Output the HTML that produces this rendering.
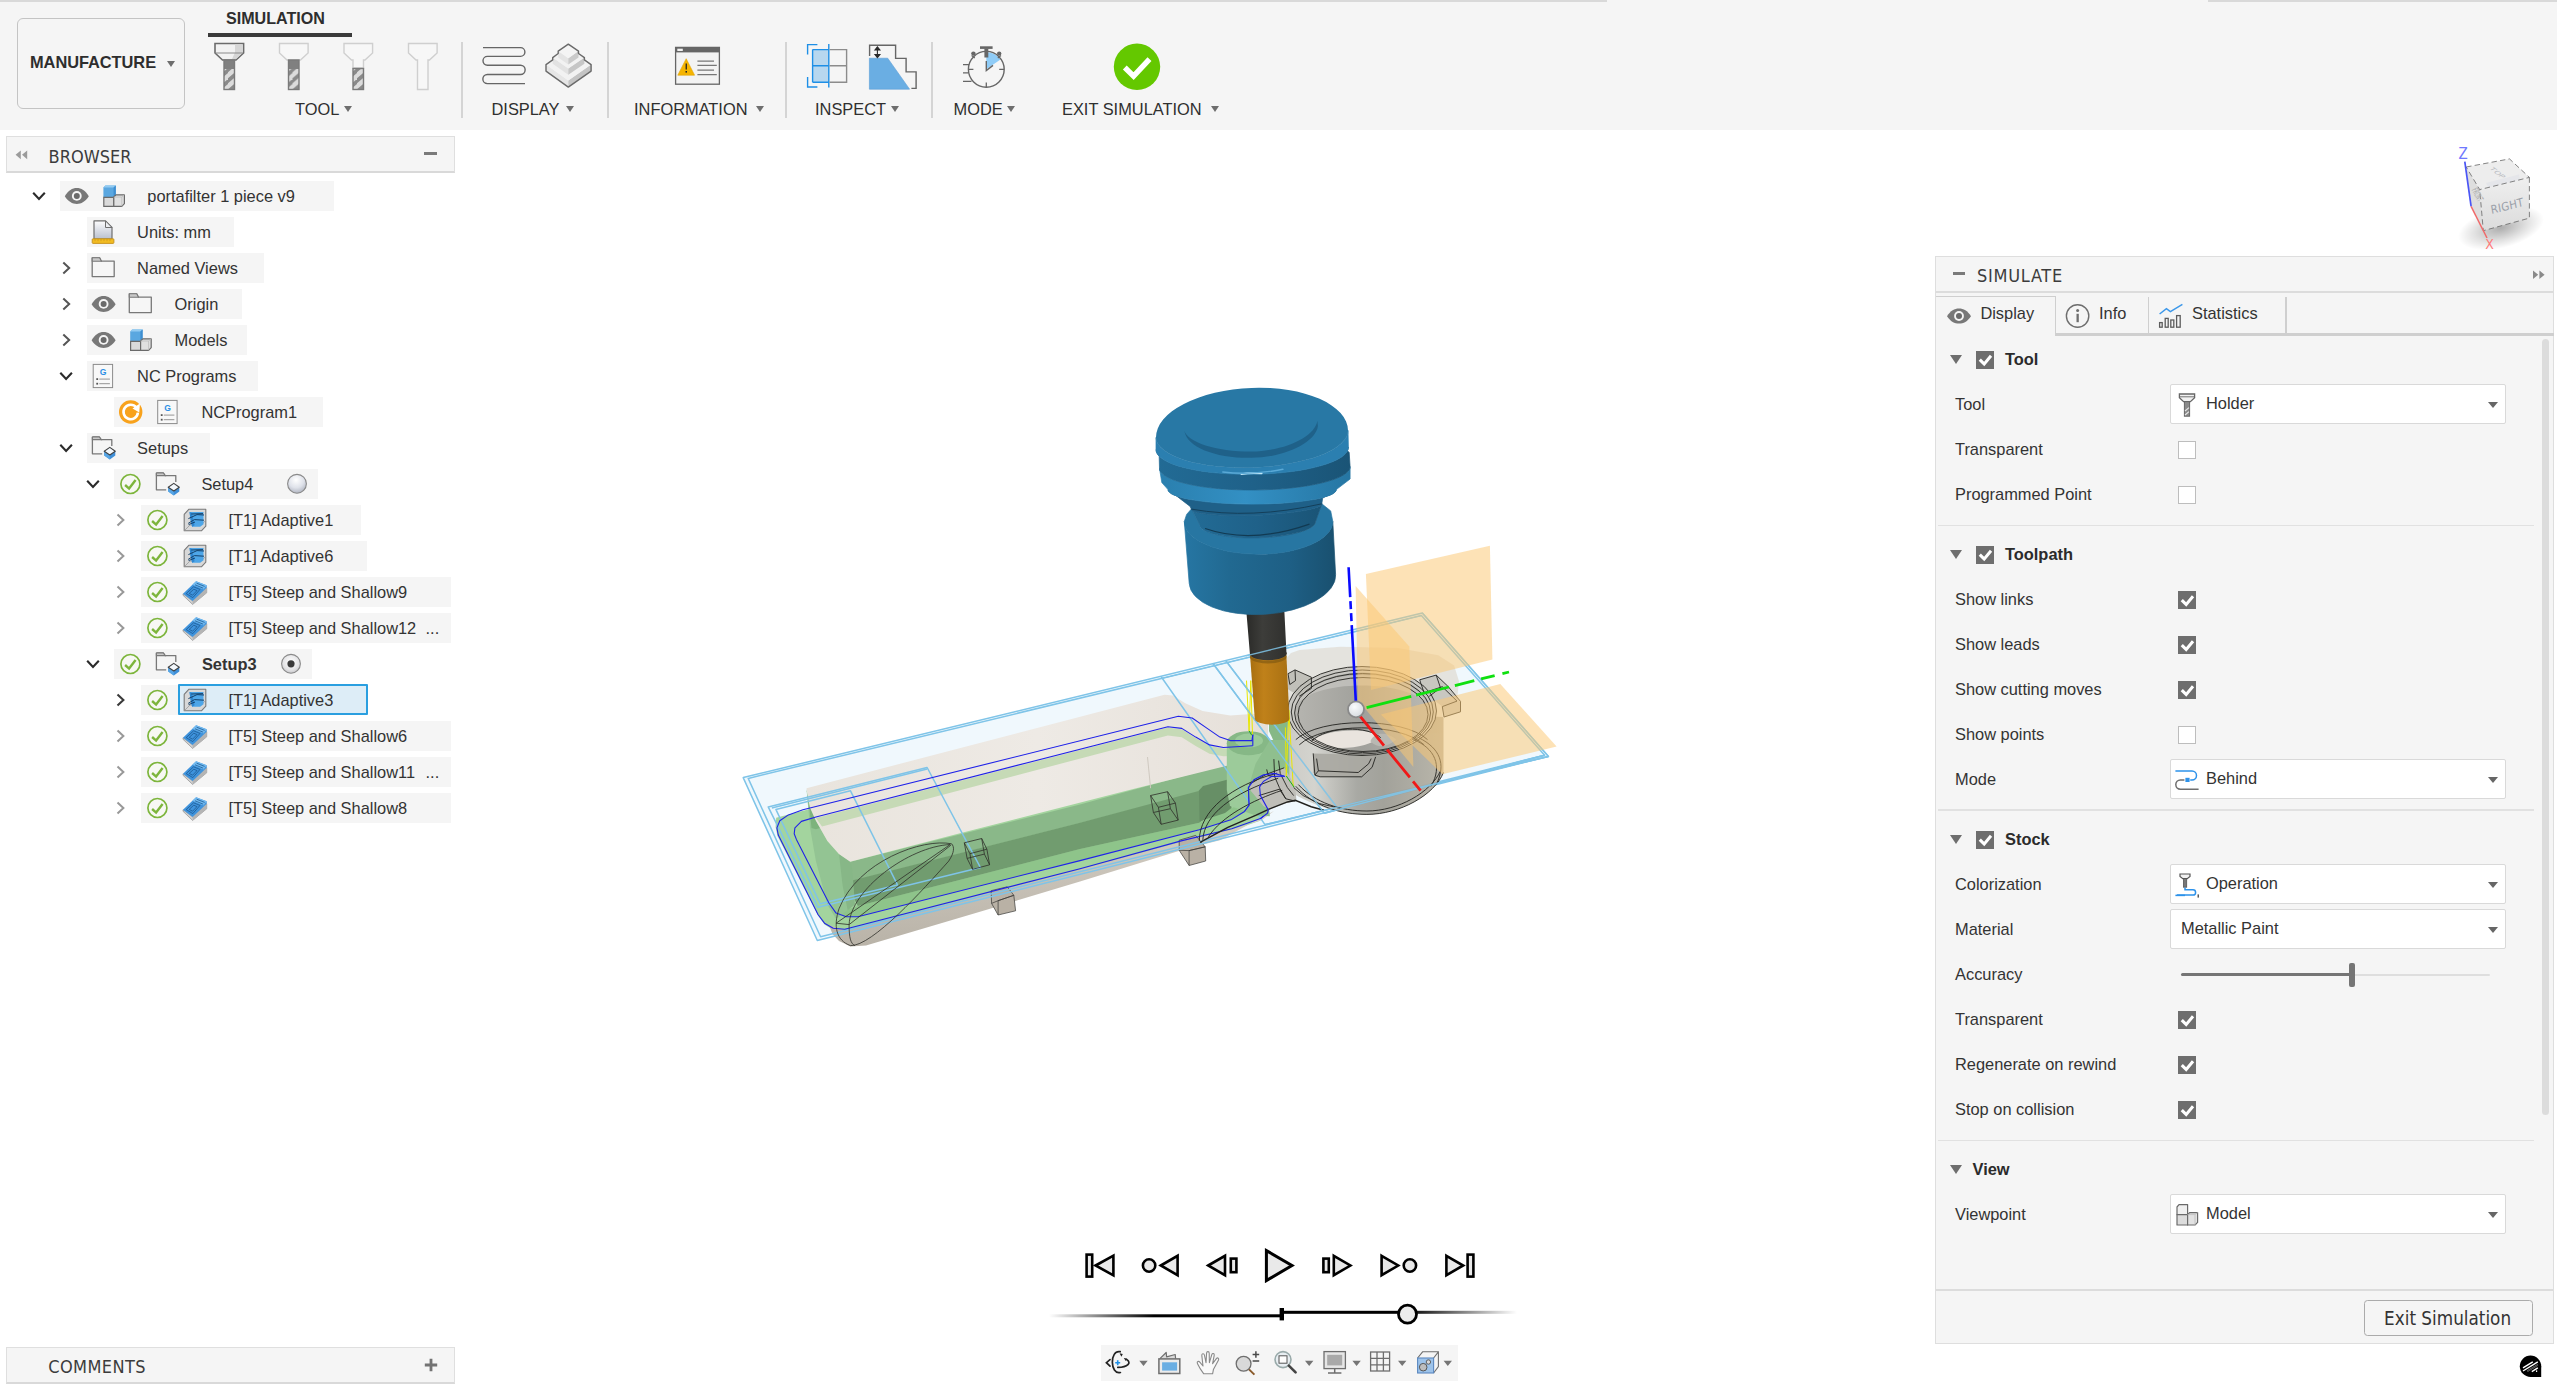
<!DOCTYPE html>
<html lang="en"><head><meta charset="utf-8"><title>Fusion 360 - Simulate</title>
<style>
*{box-sizing:border-box;margin:0;padding:0}
html,body{width:2557px;height:1385px;overflow:hidden;background:#fff}
body{position:relative;font-family:"Liberation Sans",Arial,sans-serif;font-size:16.4px;color:#333;-webkit-font-smoothing:antialiased}
.abs{position:absolute}
.t{position:absolute;white-space:nowrap;line-height:20px;height:20px}
.cond{font-family:"DejaVu Sans Condensed","DejaVu Sans","Liberation Sans",sans-serif;font-size:18px;color:#3c3c3c}
#toolbar{position:absolute;left:0;top:0;width:2557px;height:130px;background:#f5f5f5}
.sep{position:absolute;top:42px;width:2px;height:76px;background:#d4d4d4}
.tlabel{position:absolute;top:98px;height:22px;line-height:22px;white-space:nowrap;color:#2f2f2f}
.arr{position:absolute;width:0;height:0;border-left:4.5px solid transparent;border-right:4.5px solid transparent;border-top:6px solid #6e6e6e}
.rowbg{position:absolute;height:30px;background:#f5f5f5}
.rt{position:absolute;height:30px;line-height:30px;white-space:nowrap;color:#333}
svg{position:absolute;overflow:visible}
.plabel{position:absolute;left:1955px;height:20px;line-height:20px;white-space:nowrap;color:#333}
.dd{position:absolute;left:2170px;width:336px;height:40px;background:#fff;border:1px solid #d9d9d9;border-radius:2px}
.dd span{position:absolute;left:35px;top:0;height:38px;line-height:38px;white-space:nowrap}
.dd i{position:absolute;right:7px;top:17px;width:0;height:0;border-left:5px solid transparent;border-right:5px solid transparent;border-top:6px solid #666}
.cb{position:absolute;left:2178px;width:18px;height:18px;background:#fff;border:1px solid #bdbdbd}
.cbc{position:absolute;width:18px;height:18px;background:#6e6e6e}
.cbc:after{content:"";position:absolute;left:0;top:0;width:18px;height:18px;background:#fff;clip-path:polygon(15% 57%,27% 45%,45% 63%,77% 24%,90% 35%,46% 88%)}
.tri{position:absolute;width:0;height:0;border-left:6.5px solid transparent;border-right:6.5px solid transparent;border-top:9px solid #6e6e6e}
.hline{position:absolute;left:1938px;width:596px;height:1.5px;background:#e1e1e1}
.sect{position:absolute;height:20px;line-height:20px;font-weight:bold;color:#2b2b2b;white-space:nowrap}
</style></head><body>
<div id="toolbar">
<div class="abs" style="left:0;top:0;width:1607px;height:2px;background:#d9d9d9"></div>
<div class="abs" style="left:2208px;top:0;width:349px;height:2px;background:#d9d9d9"></div>
<div class="abs" style="left:17px;top:18px;width:168px;height:91px;border:1px solid #c4c4c4;border-radius:6px"></div>
<div class="t" style="left:30px;top:52px;font-weight:bold;font-size:16.4px;color:#2e2e2e;letter-spacing:-0.05px">MANUFACTURE</div>
<div class="arr" style="left:167px;top:61px"></div>
<div class="t" style="left:226px;top:8px;font-weight:bold;font-size:16.1px;color:#2e2e2e">SIMULATION</div>
<div class="abs" style="left:208px;top:33px;width:144px;height:4px;background:#3a3a3a"></div>
<!-- tool icons -->
<svg style="left:210px;top:40px" width="240" height="54" viewBox="210 40 240 54">
 <defs>
  <pattern id="fl" width="12" height="11" patternUnits="userSpaceOnUse" patternTransform="translate(0,69)"><rect width="12" height="11" fill="#dcdcdc"/><path d="M-2 11 L12 -1 L12 4 L-2 16Z M-2 0 L12 -12 L12 -7 L-2 5Z" fill="#8a8a8a"/></pattern>
 </defs>
 <g>
  <path d="M215 43.5 H243.6 V53 L236 60 H222.5 L215 53Z" fill="#f2f2f2" stroke="#6b6b6b" stroke-width="1.6"/>
  <path d="M235 44.5 H242.8 V52.6 L236 59 H232 L235 52.6Z" fill="#d6d6d6"/>
  <path d="M215.6 53 H243" stroke="#8a8a8a" stroke-width="1" fill="none"/>
  <rect x="224" y="60" width="10.5" height="9.5" fill="#808080"/>
  <rect x="224" y="69" width="10.5" height="20.5" fill="url(#fl)"/>
  <rect x="224" y="60" width="10.5" height="29.5" fill="none" stroke="#7a7a7a" stroke-width="1.4"/>
 </g>
 <g transform="translate(64.5,0)">
  <path d="M215 43.5 H243.6 V53 L236 60 H222.5 L215 53Z" fill="#f7f7f7" stroke="#cfcfcf" stroke-width="1.4"/>
  <rect x="224" y="60" width="10.5" height="9.5" fill="#808080"/>
  <rect x="224" y="69" width="10.5" height="20.5" fill="url(#fl)"/>
  <rect x="224" y="60" width="10.5" height="29.5" fill="none" stroke="#7a7a7a" stroke-width="1.4"/>
 </g>
 <g transform="translate(129,0)">
  <path d="M215 43.5 H243.6 V53 L236 60 H234.5 V68 H224 V60 H222.5 L215 53Z" fill="#f7f7f7" stroke="#cfcfcf" stroke-width="1.4"/>
  <rect x="224" y="68.5" width="10.5" height="21" fill="url(#fl)"/>
  <rect x="224" y="68.5" width="10.5" height="21" fill="none" stroke="#7a7a7a" stroke-width="1.4"/>
 </g>
 <g transform="translate(193.5,0)">
  <path d="M215 43.5 H243.6 V53 L236 60 H234.5 V89.5 H224 V60 H222.5 L215 53Z" fill="#f7f7f7" stroke="#cfcfcf" stroke-width="1.4"/>
 </g>
</svg>
<div class="tlabel" style="left:295px">TOOL</div><div class="arr" style="left:344px;top:106px"></div>
<div class="sep" style="left:461px"></div>
<!-- display icons -->
<svg style="left:480px;top:40px" width="120" height="54" viewBox="480 40 120 54">
 <path d="M483 47.6 H520.5 a4.4 4.4 0 0 1 0 8.8 H487.4 a4.4 4.4 0 0 0 0 8.8 H520.5 a4.6 4.6 0 0 1 0 9.3 H487.4 a4.5 4.5 0 0 0 0 9.1 H525" fill="none" stroke="#666" stroke-width="1.4"/>
 <path d="M546 64.6 L568.3 80.4 V87.1 L546 71.1Z" fill="#e6e6e6"/>
 <path d="M591.1 64.6 L568.3 80.4 V87.1 L591.1 71.1Z" fill="#c4c4c4"/>
 <path d="M546 64.6 L568.3 48.8 L591.1 64.6 L568.3 80.4Z" fill="#f2f2f2"/>
 <path d="M552.7 57.6 L568.3 68.6 V74.8 L552.7 63.8Z" fill="#e2e2e2"/>
 <path d="M584.4 57.6 L568.3 68.6 V74.8 L584.4 63.8Z" fill="#c6c6c6"/>
 <path d="M552.7 57.6 L568.3 46.6 L584.4 57.6 L568.3 68.6Z" fill="#f2f2f2"/>
 <path d="M558.2 51.1 L568.3 58.2 V64.6 L558.2 57.5Z" fill="#e4e4e4"/>
 <path d="M578.5 51.1 L568.3 58.2 V64.6 L578.5 57.5Z" fill="#cacaca"/>
 <path d="M558.2 51.1 L568.3 44.1 L578.5 51.1 L568.3 58.2Z" fill="#f4f4f4"/>
 <path d="M568.3 44.1 L578.5 51.1 V53.5 L584.4 57.6 V59.9 L591.1 64.6 V71.1 L568.3 87.1 L546 71.1 V64.6 L552.7 59.9 V57.6 L558.2 53.5 V51.1Z" fill="none" stroke="#6a6a6a" stroke-width="1.4" stroke-linejoin="round"/>
</svg>
<div class="tlabel" style="left:491.5px">DISPLAY</div><div class="arr" style="left:566px;top:106px"></div>
<div class="sep" style="left:606.5px"></div>
<!-- information icon -->
<svg style="left:670px;top:40px" width="60" height="54" viewBox="670 40 60 54">
 <rect x="675.6" y="47.4" width="43.8" height="36.8" fill="#f3f3f3" stroke="#666" stroke-width="1.3"/>
 <rect x="675.6" y="47.4" width="43.8" height="5" fill="#666"/>
 <rect x="677.3" y="48.7" width="5.5" height="2.3" fill="#f3f3f3"/>
 <path d="M686.2 58.7 L694.6 75.2 H677.8Z" fill="#f5b400" stroke="#e0a200" stroke-width="0.6" stroke-linejoin="round"/>
 <rect x="685.6" y="63.5" width="1.3" height="6" fill="#222"/><rect x="685.5" y="71" width="1.5" height="1.6" fill="#222"/>
 <path d="M697.4 61.2 H714 M697.4 65.3 H716.8 M697.4 70.1 H714 M697.4 74.6 H716.8" stroke="#777" stroke-width="1.2"/>
</svg>
<div class="tlabel" style="left:634px">INFORMATION</div><div class="arr" style="left:756px;top:106px"></div>
<div class="sep" style="left:785px"></div>
<!-- inspect icons -->
<svg style="left:800px;top:40px" width="125" height="54" viewBox="800 40 125 54">
 <rect x="812.6" y="49.6" width="16" height="32.6" fill="#b7d7ef"/>
 <path d="M812.6 49.6 H828.7 M812.6 65.8 H828.7 M812.6 82.2 H828.7 M812.6 49.6 V82.2" stroke="#1e8fe6" stroke-width="1.4" fill="none"/>
 <path d="M817.4 44.6 H807.6 V54.6 M817.4 87 H807.6 V77 M828.8 44 V87.6" stroke="#1e8fe6" stroke-width="1.4" fill="none"/>
 <path d="M829.5 49.6 H846.6 V82.2 H829.5 M829.5 65.8 H846.6" stroke="#8c8c8c" stroke-width="1.4" fill="none"/>
 <path d="M869.4 58.2 H887.7 L909.6 89.2 H869.4Z" fill="#6aaee3" stroke="#5a9ed6" stroke-width="0.6"/>
 <path d="M869.6 56 V45.2 H895.6 V58.4 H906.1 V71.9 H916.1 V88.4 H911.4" fill="none" stroke="#666" stroke-width="1.4"/>
 <path d="M877.4 48 V56.5 M874.9 50 L877.4 46.8 L879.9 50Z M874.9 54.5 L877.4 57.7 L879.9 54.5Z" stroke="#2a2a2a" stroke-width="1.1" fill="#2a2a2a"/>
</svg>
<div class="tlabel" style="left:815px">INSPECT</div><div class="arr" style="left:891px;top:106px"></div>
<div class="sep" style="left:930.5px"></div>
<!-- mode icon -->
<svg style="left:955px;top:40px" width="60" height="54" viewBox="955 40 60 54">
 <path d="M986.3 69.3 V52.2 A17.2 17.2 0 0 1 1000.5 59.6Z" fill="#8fccf7"/>
 <circle cx="986.3" cy="69.3" r="17.9" fill="none" stroke="#666" stroke-width="1.4"/>
 <rect x="980" y="46.3" width="12.6" height="2.6" fill="#666"/><rect x="984.4" y="48.5" width="3.9" height="9" fill="#666"/>
 <circle cx="973.4" cy="53.6" r="2.2" fill="#666"/><circle cx="999.2" cy="53.6" r="2.2" fill="#666"/>
 <path d="M971.6 55.5 L974.8 58 M1001 55.5 L997.8 58" stroke="#666" stroke-width="1.2"/>
 <path d="M986.3 61 V70.5 L993 65.4" fill="none" stroke="#666" stroke-width="1.4"/>
 <path d="M968.6 69.3 H973.4 M999.2 69.3 H1004 M986.3 82.4 V87" stroke="#666" stroke-width="1.3"/>
 <path d="M963 64.6 H969 M963 72.8 H968 M963 81.3 H971.5" stroke="#666" stroke-width="1.3"/>
</svg>
<div class="tlabel" style="left:953.5px">MODE</div><div class="arr" style="left:1007px;top:106px"></div>
<!-- exit -->
<svg style="left:1110px;top:40px" width="54" height="54" viewBox="1110 40 54 54">
 <circle cx="1137" cy="66.8" r="23.2" fill="#64c800"/>
 <path d="M1124.8 67.5 L1133.6 76.2 L1149.5 59.2" fill="none" stroke="#fff" stroke-width="5.4" stroke-linejoin="miter"/>
</svg>
<div class="tlabel" style="left:1062px">EXIT SIMULATION</div><div class="arr" style="left:1211px;top:106px"></div>
</div>
<!-- BROWSER -->
<svg width="0" height="0" style="left:0;top:0"><defs>
<linearGradient id="gdoc" x1="0" y1="0" x2="0" y2="1"><stop offset="0" stop-color="#fdfdfe"/><stop offset="1" stop-color="#b9c0cf"/></linearGradient>
<radialGradient id="grad0" cx="0.45" cy="0.3" r="0.75"><stop offset="0" stop-color="#ffffff"/><stop offset="0.55" stop-color="#dfe2ea"/><stop offset="1" stop-color="#a9aebb"/></radialGradient>
<radialGradient id="grad1" cx="0.5" cy="0.4" r="0.7"><stop offset="0" stop-color="#ffffff"/><stop offset="0.6" stop-color="#e4e4e6"/><stop offset="1" stop-color="#b9b9bd"/></radialGradient>
<g id="i-eye"><path d="M-12 0.2 C-8.5 -5.4 -4.5 -7.9 0 -7.9 C4.5 -7.9 8.5 -5.4 12 0.2 C8.5 5.6 4.5 7.9 0 7.9 C-4.5 7.9 -8.5 5.6 -12 0.2Z" fill="#787878"/><circle cx="0" cy="-0.1" r="4.9" fill="#f5f5f5"/><circle cx="0" cy="-0.1" r="3" fill="#6a6a6a"/></g>
<g id="i-cd"><path d="M-5.8 -3.3 L0 2.9 L5.8 -3.3" fill="none" stroke="#2b2b2b" stroke-width="2.1"/></g>
<g id="i-cr"><path d="M-3 -5.6 L2.9 0 L-3 5.6" fill="none" stroke="#555" stroke-width="2"/></g>
<g id="i-crg"><path d="M-3 -5.6 L2.9 0 L-3 5.6" fill="none" stroke="#999" stroke-width="2"/></g>
<g id="i-crd"><path d="M-3 -5.6 L2.9 0 L-3 5.6" fill="none" stroke="#3a3a3a" stroke-width="2.1"/></g>
<g id="i-comp"><path d="M-10.6 -8.4 L-8.6 -10.5 H1.8 V-0.6 L-0.4 1.4 H-10.6Z" fill="#5aa7e0"/><path d="M-10.6 -8.4 L-8.6 -10.5 H1.8 L-0.4 -8.4Z" fill="#93cbf2"/><path d="M-0.4 -8.4 L1.8 -10.5 V-0.6 L-0.4 1.4Z" fill="#3e8ed0"/><path d="M-10.2 1.4 H-0.2 V10.3 H-10.2Z" fill="#dadada" stroke="#6a6a6a" stroke-width="1.2"/><path d="M-0.2 1 L2 -1.2 H10.4 V7.6 L7.8 10.3 H-0.2Z" fill="#e0e0e0" stroke="#6a6a6a" stroke-width="1.2" stroke-linejoin="round"/><path d="M-0.2 1 H7.8 V10.3 M7.8 1 L10.4 -1.2" fill="none" stroke="#bdbdbd" stroke-width="0.8"/></g>
<g id="i-units"><path d="M-9 -9.6 H2.5 L9 -3 V8.5 H-9Z" fill="url(#gdoc)" stroke="#6e6e6e" stroke-width="1.2" stroke-linejoin="round"/><path d="M2.5 -9.6 V-3 H9Z" fill="#eceef2" stroke="#6e6e6e" stroke-width="1" stroke-linejoin="round"/><rect x="-10.8" y="8.3" width="21.7" height="4.6" rx="0.8" fill="#f2bc22" stroke="#c48f1a" stroke-width="0.9"/><path d="M-8 8.6 v2 M-5 8.6 v2 M-2 8.6 v2 M1 8.6 v2 M4 8.6 v2 M7 8.6 v2" stroke="#c48f1a" stroke-width="0.6"/></g>
<g id="i-fold"><path d="M-11 -9.4 H-3.6 L-1.8 -6 H11 V9.4 H-11Z" fill="#f6f6f6" stroke="#787878" stroke-width="1.3" stroke-linejoin="round"/><path d="M-11 -9.4 H-3.6 L-1.8 -6 H-11Z" fill="#c9c9c9" stroke="#787878" stroke-width="1.1" stroke-linejoin="round"/></g>
<g id="i-nc"><rect x="-9.7" y="-11.6" width="19.4" height="23.2" fill="#f8f8f8" stroke="#8a8a8a" stroke-width="1"/><rect x="-6.6" y="2.2" width="1.8" height="1.8" fill="#555"/><rect x="-6.6" y="6.8" width="1.8" height="1.8" fill="#555"/><path d="M-3.6 3.1 H7 M-3.6 7.7 H7" stroke="#8a8a8a" stroke-width="0.9"/></g>
<g id="i-ref"><circle r="11.7" fill="#f8a21c"/><path d="M5.6 -4.6 A7.2 7.2 0 1 0 7.2 0.6" fill="none" stroke="#fff" stroke-width="2.6"/><path d="M1.8 -3.4 L9.2 -8.4 L8.6 0.6Z" fill="#fff"/></g>
<g id="i-setup"><path d="M-10.8 -11 H-3.8 L-2 -8.4 H8.6 V-2 M-1 5.8 H-10.8 V-11" fill="none" stroke="#787878" stroke-width="1.3" stroke-linejoin="round"/><path d="M-10.8 -11 H-3.8 L-2 -8.4 H-10.8Z" fill="#c9c9c9" stroke="#787878" stroke-width="1.1"/><path d="M6.6 -0.6 L12.1 3.2 V7.6 L6.6 11.6 L1 7.6 V3.2Z" fill="#3f8fd8"/><path d="M1 3.2 L6.6 7 V11.6 L1 7.6Z" fill="#57a6e6"/><path d="M6.6 -0.6 L12.1 3.2 L6.6 7 L1 3.2Z" fill="#f4f8fc" stroke="#444" stroke-width="1.1" stroke-linejoin="round"/></g>
<g id="i-ok"><circle r="9.5" fill="#f7f8f3" stroke="#7db53c" stroke-width="1.7"/><path d="M-5.3 1 L-1.3 4.6 L5.2 -3.9" fill="none" stroke="#7db53c" stroke-width="2.4"/></g>
<g id="i-r0"><circle r="9.4" fill="url(#grad0)" stroke="#8a8a8a" stroke-width="1.1"/></g>
<g id="i-r1"><circle r="9.4" fill="url(#grad1)" stroke="#8a8a8a" stroke-width="1.1"/><circle r="3.6" fill="#3a3a3a"/></g>
<g id="i-adp"><path d="M-6 -10.8 H10.8 V6.2 L6.4 10.8 H-10.8 V-5.6Z" fill="#d8d8d8" stroke="#7a7a7a" stroke-width="1.1" stroke-linejoin="round"/><path d="M-10.8 10.8 L-5 5 H6 L10.8 0.4" fill="none" stroke="#9a9a9a" stroke-width="0.8"/><path d="M-5.5 -8.1 H8.5 V4.2 L5.2 6.8 H-2.9 L-4.4 0.2Z" fill="#4ea6e8"/><path d="M-2.9 6.8 L-4.4 0.2 L-5.5 -8.1 L-3 -7 L-1.4 1 L-0.4 5.2Z" fill="#2f86d0"/><path d="M-6.6 -1.4 L2 -5.4 L9 -5 M-6.8 3.4 L-0.6 -0.4 L9 0.2 M-3.6 -6 L8 -6.4 M-6.4 4.6 L0 2" stroke="#14416a" stroke-width="1" fill="none"/></g>
<g id="i-sns"><path d="M-12 1.8 L-2.4 8.9 L11.7 -4.2 V0.8 L-2.4 12.4 L-12 3.3Z" fill="#d2d2d2" stroke="#8e8e8e" stroke-width="0.7" stroke-linejoin="round"/><path d="M-2.4 8.9 L11.7 -4.2 V0.8 L-2.4 12.4Z" fill="#b4b4b4"/><path d="M-12 1.8 L1.1 -10.8 L11.7 -6.8 V-4.2 L-2.4 8.9Z" fill="#3f93dc"/><path d="M1.1 -10.8 L11.7 -6.8 L8.6 -2.6 L-2.6 -7.2Z" fill="#72baf0"/><path d="M-8.8 1.6 L-1.4 -5.2 L5 -2.6 L-2.2 5.6Z M-5.8 1.4 L-1.2 -2.8 L2 -1.4 L-2.4 3.2Z" fill="none" stroke="#1c5a94" stroke-width="0.8" stroke-linejoin="round"/><path d="M1.6 -8.8 L9.6 -5.6 M0 -7.2 L8.2 -3.8" stroke="#1c5a94" stroke-width="0.8"/></g>
</defs></svg>
<div class="abs" style="left:6px;top:136px;width:449px;height:37px;background:#f5f5f5;border:1px solid #dfdfdf;border-bottom:2px solid #d9d9d9"></div>
<svg style="left:14px;top:148px" width="16" height="14" viewBox="14 148 16 14"><path d="M20.8 150.4 V159.2 L15.6 154.8Z M27.2 150.4 V159.2 L22 154.8Z" fill="#9b9b9b"/></svg>
<div class="t cond" style="left:48.6px;top:146.6px;letter-spacing:0.02px">BROWSER</div>
<div class="abs" style="left:424px;top:152.4px;width:12.6px;height:3px;background:#7a7a7a"></div>
<div class="abs" style="left:6px;top:1347px;width:449px;height:37px;background:#f5f5f5;border:1px solid #dfdfdf;border-bottom:2px solid #d9d9d9"></div>
<div class="t cond" style="left:48.2px;top:1357.2px;letter-spacing:0.42px">COMMENTS</div>
<svg style="left:423.5px;top:1358.2px" width="14" height="14" viewBox="0 0 14 14"><path d="M7 0.8 V13.2 M0.8 7 H13.2" stroke="#737373" stroke-width="2.8"/></svg>
<div class="rowbg" style="left:60px;top:181px;width:274px"></div>
<div class="rt" style="left:147.3px;top:181px;">portafilter 1 piece v9</div>
<div class="rowbg" style="left:87px;top:217px;width:147px"></div>
<div class="rt" style="left:137.1px;top:217px;">Units: mm</div>
<div class="rowbg" style="left:87px;top:253px;width:177px"></div>
<div class="rt" style="left:137.1px;top:253px;">Named Views</div>
<div class="rowbg" style="left:87px;top:289px;width:154.5px"></div>
<div class="rt" style="left:174.6px;top:289px;">Origin</div>
<div class="rowbg" style="left:87px;top:325px;width:160px"></div>
<div class="rt" style="left:174.6px;top:325px;">Models</div>
<div class="rowbg" style="left:87px;top:361px;width:170.7px"></div>
<div class="rt" style="left:137.1px;top:361px;">NC Programs</div>
<div class="rowbg" style="left:114px;top:397px;width:208.5px"></div>
<div class="rt" style="left:201.4px;top:397px;">NCProgram1</div>
<div class="rowbg" style="left:87px;top:433px;width:122.69999999999999px"></div>
<div class="rt" style="left:137.1px;top:433px;">Setups</div>
<div class="rowbg" style="left:114px;top:469px;width:203.7px"></div>
<div class="rt" style="left:201.4px;top:469px;">Setup4</div>
<div class="rowbg" style="left:141px;top:505px;width:220.3px"></div>
<div class="rt" style="left:228.5px;top:505px;">[T1] Adaptive1</div>
<div class="rowbg" style="left:141px;top:541px;width:226.10000000000002px"></div>
<div class="rt" style="left:228.5px;top:541px;">[T1] Adaptive6</div>
<div class="rowbg" style="left:141px;top:577px;width:310.4px"></div>
<div class="rt" style="left:228.5px;top:577px;">[T5] Steep and Shallow9</div>
<div class="rowbg" style="left:141px;top:613px;width:310.4px"></div>
<div class="rt" style="left:228.5px;top:613px;">[T5] Steep and Shallow12</div>
<div class="rt" style="left:425.4px;top:613px;letter-spacing:0.1px">...</div>
<div class="rowbg" style="left:114px;top:649px;width:198px"></div>
<div class="rt" style="left:201.9px;top:649px;font-weight:bold;">Setup3</div>
<div class="rowbg" style="left:141px;top:685px;width:227px"></div>
<div class="abs" style="left:178px;top:684px;width:190px;height:31.4px;background:#ddedf7;border:2px solid #2a9fe0;border-radius:1px"></div>
<div class="rt" style="left:228.5px;top:685px;">[T1] Adaptive3</div>
<div class="rowbg" style="left:141px;top:721px;width:310.4px"></div>
<div class="rt" style="left:228.5px;top:721px;">[T5] Steep and Shallow6</div>
<div class="rowbg" style="left:141px;top:757px;width:310.4px"></div>
<div class="rt" style="left:228.5px;top:757px;">[T5] Steep and Shallow11</div>
<div class="rt" style="left:425.4px;top:757px;letter-spacing:0.1px">...</div>
<div class="rowbg" style="left:141px;top:793px;width:310.4px"></div>
<div class="rt" style="left:228.5px;top:793px;">[T5] Steep and Shallow8</div>
<svg style="left:0;top:130px" width="460" height="700" viewBox="0 130 460 700"><use href="#i-cd" x="39" y="196"/><use href="#i-eye" x="76.8" y="196"/><use href="#i-comp" x="114" y="196"/><use href="#i-units" x="103" y="230.5"/><use href="#i-cr" x="66.3" y="268"/><use href="#i-fold" x="103.2" y="267.2"/><use href="#i-cr" x="66.3" y="304"/><use href="#i-eye" x="103.6" y="304"/><use href="#i-fold" x="140.3" y="303.2"/><use href="#i-cr" x="66.3" y="340"/><use href="#i-eye" x="103.6" y="340"/><use href="#i-comp" x="140.8" y="340"/><use href="#i-cd" x="66.1" y="376"/><use href="#i-nc" x="102.9" y="376"/><text x="103.2" y="374.8" text-anchor="middle" font-family="Liberation Sans,sans-serif" font-weight="bold" font-size="8.6" fill="#2b8fe6">G</text><use href="#i-ref" x="130.7" y="412"/><use href="#i-nc" x="167.4" y="412"/><text x="167.70000000000002" y="410.8" text-anchor="middle" font-family="Liberation Sans,sans-serif" font-weight="bold" font-size="8.6" fill="#2b8fe6">G</text><use href="#i-cd" x="66.1" y="448"/><use href="#i-setup" x="103.2" y="448"/><use href="#i-cd" x="93" y="484"/><use href="#i-ok" x="130.4" y="484"/><use href="#i-setup" x="167.2" y="484"/><use href="#i-r0" x="297" y="483.8"/><use href="#i-crg" x="120.5" y="520"/><use href="#i-ok" x="157.4" y="520"/><use href="#i-adp" x="195" y="520"/><use href="#i-crg" x="120.5" y="556"/><use href="#i-ok" x="157.4" y="556"/><use href="#i-adp" x="195" y="556"/><use href="#i-crg" x="120.5" y="592"/><use href="#i-ok" x="157.4" y="592"/><use href="#i-sns" x="195" y="592"/><use href="#i-crg" x="120.5" y="628"/><use href="#i-ok" x="157.4" y="628"/><use href="#i-sns" x="195" y="628"/><use href="#i-cd" x="93" y="664"/><use href="#i-ok" x="130.4" y="664"/><use href="#i-setup" x="167.2" y="664"/><use href="#i-r1" x="291" y="663.8"/><use href="#i-crd" x="120.5" y="700"/><use href="#i-ok" x="157.4" y="700"/><use href="#i-adp" x="195" y="700"/><use href="#i-crg" x="120.5" y="736"/><use href="#i-ok" x="157.4" y="736"/><use href="#i-sns" x="195" y="736"/><use href="#i-crg" x="120.5" y="772"/><use href="#i-ok" x="157.4" y="772"/><use href="#i-sns" x="195" y="772"/><use href="#i-crg" x="120.5" y="808"/><use href="#i-ok" x="157.4" y="808"/><use href="#i-sns" x="195" y="808"/></svg>
<!-- SIMULATE PANEL -->
<div class="abs" style="left:1935px;top:256px;width:619px;height:1088px;background:#f5f5f5;border:1px solid #dedede"></div>
<div class="abs" style="left:1935px;top:256px;width:619px;height:37px;border:1px solid #dedede;border-bottom:2px solid #dcdcdc"></div>
<div class="abs" style="left:1953px;top:272.4px;width:12.4px;height:3px;background:#7a7a7a"></div>
<div class="t cond" style="left:1977px;top:266px;letter-spacing:0.72px">SIMULATE</div>
<svg style="left:2530px;top:268px" width="16" height="14" viewBox="2530 268 16 14"><path d="M2533 270.4 V279 L2538.2 274.7Z M2539.4 270.4 V279 L2544.6 274.7Z" fill="#8a8a8a"/></svg>
<div class="abs" style="left:2055px;top:333.4px;width:499px;height:2.4px;background:#cfcfcf"></div>
<div class="abs" style="left:1936px;top:296px;width:120px;height:39px;background:#f5f5f5;border:1px solid #cfcfcf;border-bottom:none;border-left:none;border-right-width:1.5px"></div>
<div class="abs" style="left:2147.5px;top:297px;width:1.5px;height:37px;background:#cfcfcf"></div>
<div class="abs" style="left:2285px;top:297px;width:1.5px;height:37px;background:#cfcfcf"></div>
<svg style="left:1940px;top:300px" width="250" height="32" viewBox="1940 300 250 32"><g transform="translate(1959 316)"><path d="M-12 0.2 C-8.5 -5.4 -4.5 -7.6 0 -7.6 C4.5 -7.6 8.5 -5.4 12 0.2 C8.5 5.4 4.5 7.6 0 7.6 C-4.5 7.6 -8.5 5.4 -12 0.2Z" fill="#787878"/><circle r="4.9" fill="#f5f5f5"/><circle r="3" fill="#6a6a6a"/></g><circle cx="2077.6" cy="316" r="11.2" fill="none" stroke="#6e6e6e" stroke-width="1.4"/><rect x="2076.5" y="313.8" width="2.3" height="8.4" fill="#6e6e6e"/><circle cx="2077.6" cy="310.6" r="1.5" fill="#6e6e6e"/><path d="M2159.6 314 L2166.4 308.6 L2170.4 311.6 L2182.4 304.4" fill="none" stroke="#3c98ea" stroke-width="1.5"/><g fill="#f5f5f5" stroke="#5c5c5c" stroke-width="1.3"><rect x="2159.6" y="322.6" width="2.6" height="4.6"/><rect x="2165.2" y="318.4" width="3" height="8.8"/><rect x="2170.8" y="320" width="3" height="7.2"/><rect x="2176.6" y="315.6" width="3.6" height="11.6"/></g></svg>
<div class="t" style="left:1980.4px;top:303px">Display</div>
<div class="t" style="left:2099px;top:303px">Info</div>
<div class="t" style="left:2192px;top:303px">Statistics</div>
<div class="abs" style="left:2542px;top:339px;width:7px;height:776px;background:#dcdcdc;border-radius:3.5px"></div>
<div class="tri" style="left:1950.3px;top:355.0px"></div>
<div class="cbc" style="left:1976px;top:350.5px"></div>
<div class="sect" style="left:2005px;top:348.5px">Tool</div>
<div class="plabel" style="top:394px">Tool</div>
<div class="dd" style="top:384.1px"><span style="left:35px;top:-1px">Holder</span><i></i></div>
<svg style="left:2176px;top:391.5px" width="22" height="26" viewBox="-11 -13 22 26"><path d="M-7.6 -11 H7.6 V-7.4 L3.4 -3.4 H-3.4 L-7.6 -7.4Z" fill="#f2f2f2" stroke="#666" stroke-width="1.3"/><path d="M-7.6 -8.2 H7.6" stroke="#666" stroke-width="0.9"/><rect x="-2.6" y="-3.4" width="5.2" height="14.6" fill="#8a8a8a" stroke="#666" stroke-width="1"/><path d="M-2 6 L2 2.6 M-2 10 L2 6.6" stroke="#e6e6e6" stroke-width="1.2"/></svg>
<div class="plabel" style="top:439px">Transparent</div>
<div class="cb" style="top:441px"></div>
<div class="plabel" style="top:484px">Programmed Point</div>
<div class="cb" style="top:486px"></div>
<div class="hline" style="top:524.6px"></div>
<div class="tri" style="left:1950.3px;top:550.0px"></div>
<div class="cbc" style="left:1976px;top:545.5px"></div>
<div class="sect" style="left:2005px;top:543.5px">Toolpath</div>
<div class="plabel" style="top:589px">Show links</div>
<div class="cbc" style="left:2178px;top:591px"></div>
<div class="plabel" style="top:634px">Show leads</div>
<div class="cbc" style="left:2178px;top:636px"></div>
<div class="plabel" style="top:679px">Show cutting moves</div>
<div class="cbc" style="left:2178px;top:681px"></div>
<div class="plabel" style="top:724px">Show points</div>
<div class="cb" style="top:726px"></div>
<div class="plabel" style="top:769px">Mode</div>
<div class="dd" style="top:759.1px"><span style="left:35px;top:-1px">Behind</span><i></i></div>
<svg style="left:2174px;top:766.5px" width="26" height="26" viewBox="-13 -13 26 26"><path d="M-11.6 -9 H5 a4.5 4.5 0 0 1 0 9 H3.2" fill="none" stroke="#2d92ea" stroke-width="1.5"/><path d="M-2.6 0 H-6.6 a4.6 4.6 0 0 0 0 9.2 H11.6" fill="none" stroke="#6e6e6e" stroke-width="1.5"/><rect x="-1.6" y="-2.2" width="4.2" height="4.2" fill="#2d92ea"/></svg>
<div class="hline" style="top:809.2px"></div>
<div class="tri" style="left:1950.3px;top:835.0px"></div>
<div class="cbc" style="left:1976px;top:830.5px"></div>
<div class="sect" style="left:2005px;top:828.5px">Stock</div>
<div class="plabel" style="top:874px">Colorization</div>
<div class="dd" style="top:864.1px"><span style="left:35px;top:-1px">Operation</span><i></i></div>
<svg style="left:2174px;top:871.5px" width="28" height="28" viewBox="-13 -13 28 28"><path d="M-7 -11 H3 V-8.6 L0.2 -6.4 H-4.2 L-7 -8.6Z" fill="#f2f2f2" stroke="#555" stroke-width="1.2"/><rect x="-3.6" y="-6.4" width="3.3" height="8.6" fill="#777" stroke="#555" stroke-width="0.8"/><path d="M-2 2.6 V4.8 H6 a2.6 2.6 0 0 1 0 5.2 H-9.4 a2 2 0 0 0 0 0.2" fill="none" stroke="#2d92ea" stroke-width="1.5"/><path d="M-11.6 10.4 H-2" stroke="#2d92ea" stroke-width="1.5"/><rect x="10.6" y="9.4" width="1.2" height="3.2" fill="#333"/></svg>
<div class="plabel" style="top:919px">Material</div>
<div class="dd" style="top:909.1px"><span style="left:10px;top:-1px">Metallic Paint</span><i></i></div>
<div class="plabel" style="top:964px">Accuracy</div>
<div class="abs" style="left:2181px;top:973.6px;width:309px;height:2px;background:#dedede;border-radius:1px"></div>
<div class="abs" style="left:2181px;top:973px;width:171px;height:3px;background:#757575;border-radius:1.5px"></div>
<div class="abs" style="left:2349.4px;top:963px;width:6px;height:24px;background:#757575;border-radius:2px"></div>
<div class="plabel" style="top:1009px">Transparent</div>
<div class="cbc" style="left:2178px;top:1011px"></div>
<div class="plabel" style="top:1054px">Regenerate on rewind</div>
<div class="cbc" style="left:2178px;top:1056px"></div>
<div class="plabel" style="top:1099px">Stop on collision</div>
<div class="cbc" style="left:2178px;top:1101px"></div>
<div class="hline" style="top:1139.6px"></div>
<div class="tri" style="left:1950.3px;top:1165.0px"></div>
<div class="sect" style="left:1972.5px;top:1158.5px">View</div>
<div class="plabel" style="top:1204px">Viewpoint</div>
<div class="dd" style="top:1194.1px"><span style="left:35px;top:-1px">Model</span><i></i></div>
<svg style="left:2174px;top:1201.5px" width="26" height="26" viewBox="-13 -13 26 26"><path d="M-10 -8 L-8 -10.4 H0.6 V-0.4 H-10Z" fill="#f0f0f0" stroke="#6a6a6a" stroke-width="1.2" stroke-linejoin="round"/><path d="M-10 -0.4 H0.6 V10 H-10Z" fill="#dcdcdc" stroke="#6a6a6a" stroke-width="1.2" stroke-linejoin="round"/><path d="M0.6 -0.4 L2.6 -2.4 H10.6 V7.4 L8 10 H0.6Z" fill="#e2e2e2" stroke="#6a6a6a" stroke-width="1.2" stroke-linejoin="round"/><path d="M0.6 -0.4 H8 V10 M8 -0.4 L10.6 -2.4" fill="none" stroke="#bcbcbc" stroke-width="0.8"/></svg>
<div class="abs" style="left:1936px;top:1289.4px;width:617px;height:1.6px;background:#dcdcdc"></div>
<div class="abs" style="left:2364px;top:1300px;width:169.4px;height:36px;border:1.5px solid #ababab;border-radius:3.5px;background:#f5f5f5"></div>
<div class="abs" style="left:2362.6px;top:1301px;width:170px;height:36px;line-height:36px;text-align:center;font-family:DejaVu Sans Condensed,Liberation Sans,sans-serif;font-size:18.7px;color:#333;letter-spacing:0.02px">Exit Simulation</div>
<!-- VIEW CUBE -->
<svg style="left:2440px;top:135px" width="117" height="122" viewBox="2440 135 117 122">
 <defs><radialGradient id="cubsh" cx="0.5" cy="0.5" r="0.5"><stop offset="0" stop-color="#000" stop-opacity="0.32"/><stop offset="0.6" stop-color="#000" stop-opacity="0.12"/><stop offset="1" stop-color="#000" stop-opacity="0"/></radialGradient>
 <linearGradient id="cubr" x1="0" y1="0" x2="0" y2="1"><stop offset="0" stop-color="#efefef"/><stop offset="1" stop-color="#dcdcdc"/></linearGradient></defs>
 <ellipse cx="2501" cy="228" rx="44" ry="20" fill="url(#cubsh)" transform="rotate(-14 2501 228)"/>
 <path d="M2466.2 167 L2509.5 158.9 L2529.4 177.4 L2479.7 189.6Z" fill="#ededed"/>
 <path d="M2486 183 L2519 174.5 L2521 184 L2491 193Z" fill="#e2e4e8" opacity="0.8"/>
 <path d="M2479.7 189.6 L2529.4 177.4 V218.1 L2483.3 230.7Z" fill="url(#cubr)"/>
 <path d="M2466.2 167 L2479.7 189.6 L2483.3 230.7 L2471.1 206.3Z" fill="#dedede"/>
 <path d="M2466.2 167 L2509.5 158.9 L2529.4 177.4 L2479.7 189.6Z M2529.4 177.4 V218.1 L2483.3 230.7 L2479.7 189.6" fill="none" stroke="#666" stroke-width="0.8" stroke-dasharray="5.4 3.2"/>
 <text transform="translate(2491.6 214) rotate(-14) skewX(-4)" font-family="DejaVu Sans Condensed,Liberation Sans,sans-serif" font-size="11.6" letter-spacing="0.2" fill="#9aa0a9">RIGHT</text>
 <text transform="translate(2489 168.6) rotate(38) skewX(-30) scale(1,0.62)" font-family="DejaVu Sans Condensed,Liberation Sans,sans-serif" font-size="9" fill="#b9bcc2">TOP</text>
 <text transform="translate(2471.6 190) rotate(62) scale(0.5,1)" font-family="DejaVu Sans Condensed,Liberation Sans,sans-serif" font-size="9" fill="#aaa">FRONT</text>
 <path d="M2464.8 161.6 L2471.1 206.3" stroke="#4a55f5" stroke-width="1.7"/>
 <path d="M2471.1 206.3 L2487 238" stroke="#f06a6a" stroke-width="1.5"/>
 <text x="2458.6" y="159.4" font-family="DejaVu Sans Condensed,Liberation Sans,sans-serif" font-size="15" fill="#6f78ff">Z</text>
 <text x="2485.2" y="248.6" font-family="DejaVu Sans Condensed,Liberation Sans,sans-serif" font-size="14" fill="#ff7a7a">X</text>
</svg>
<!-- PLAYBACK -->
<svg style="left:1040px;top:1240px" width="490" height="95" viewBox="1040 1240 490 95">
 <defs>
  <linearGradient id="fadeL" x1="0" y1="0" x2="1" y2="0"><stop offset="0" stop-color="#000" stop-opacity="0"/><stop offset="0.45" stop-color="#000" stop-opacity="1"/><stop offset="1" stop-color="#000"/></linearGradient>
  <linearGradient id="fadeR" x1="0" y1="0" x2="1" y2="0"><stop offset="0" stop-color="#000" stop-opacity="0.9"/><stop offset="1" stop-color="#000" stop-opacity="0"/></linearGradient>
 </defs>
 <g fill="#e9e9e9" stroke="#000" stroke-width="2.6" stroke-linejoin="miter">
  <rect x="1086.6" y="1254.6" width="5.6" height="22"/><path d="M1095.6 1265.5 L1113.4 1255.6 V1275.4Z"/>
  <circle cx="1149.1" cy="1265.5" r="6.2"/><path d="M1160.8 1265.5 L1177.6 1255.8 V1275.2Z"/>
  <path d="M1208.2 1265.5 L1225 1255.8 V1275.2Z"/><rect x="1230.8" y="1258.6" width="5.6" height="13.6"/>
  <path d="M1266.4 1250.6 L1292 1265.5 L1266.4 1280.6Z" stroke-width="3"/>
  <rect x="1323.4" y="1258.6" width="5.4" height="13.6"/><path d="M1333.8 1255.8 L1350.4 1265.5 L1333.8 1275.2Z"/>
  <path d="M1381.6 1255.8 L1398.2 1265.5 L1381.6 1275.2Z"/><circle cx="1409.9" cy="1265.5" r="6.2"/>
  <path d="M1446.4 1255.8 L1463.2 1265.5 L1446.4 1275.2Z"/><rect x="1467.6" y="1254.6" width="5.8" height="22"/>
 </g>
 <rect x="1049" y="1314.3" width="233" height="3" fill="url(#fadeL)"/>
 <rect x="1279.6" y="1308" width="4.4" height="12.4" fill="#000"/>
 <rect x="1282" y="1310.8" width="116" height="3" fill="#000"/>
 <rect x="1417" y="1310.8" width="100" height="3" fill="url(#fadeR)"/>
 <circle cx="1407.5" cy="1314.2" r="9" fill="#ececec" stroke="#000" stroke-width="2.8"/>
</svg>
<!-- NAV BAR -->
<div class="abs" style="left:1101px;top:1345px;width:357px;height:36px;background:#f5f5f5"></div>
<svg style="left:1101px;top:1345px" width="357" height="36" viewBox="1101 1345 357 36">
 <g fill="#757575"><path d="M1139.3 1360.8 h8.4 l-4.2 5.2Z M1305 1360.8 h8.4 l-4.2 5.2Z M1352.4 1360.8 h8.4 l-4.2 5.2Z M1398 1360.8 h8.4 l-4.2 5.2Z M1443.6 1360.8 h8.4 l-4.2 5.2Z"/></g>
 <!-- orbit -->
 <g fill="none" stroke="#222" stroke-width="1.7" stroke-linecap="round"><path d="M1120.2 1351.7 C1109.5 1349.4 1109.9 1375.2 1120.4 1372.5"/><path d="M1110.0 1359.6 L1106.4 1362.7 L1110.0 1366.2"/><path d="M1126.7 1359.6 C1131.8 1362.7 1127.9 1367.0 1117.8 1367.4"/></g>
 <path d="M1119.6 1353.3 L1122.8 1354.1 L1121.4 1356.8 Z M1123.8 1358.1 L1127.1 1358.4 L1125.7 1361.1 Z" fill="#222"/>
 <path d="M1115.2 1362.7 H1120.2 M1117.7 1360.2 V1365.2" stroke="#1e90e8" stroke-width="1.6"/>
 <!-- look at -->
 <path d="M1159.9 1358.6 L1166.2 1352.5 L1166.6 1356.8 L1175.2 1354.5 L1175.6 1358.8" fill="#dadada" stroke="#6e6e6e" stroke-width="1.2" stroke-linejoin="round"/>
 <rect x="1158.9" y="1358.9" width="20.9" height="14.6" fill="#ebebeb" stroke="#6e6e6e" stroke-width="1.5"/><rect x="1162.1" y="1362.3" width="15" height="8.3" fill="#6aaee3"/>
 <!-- hand -->
 <g fill="#fafafa" stroke="#8a8a8a" stroke-width="1.1" stroke-linejoin="round"><path d="M1203.6 1373.6 C1201 1370 1198.6 1366 1197.4 1363.4 C1196.6 1361.6 1198.6 1360.6 1199.8 1362.2 L1203 1366 L1201.8 1355.4 C1201.6 1353.4 1204 1353.2 1204.4 1355 L1206 1362.6 L1206.6 1353 C1206.8 1351 1209.2 1351.2 1209.2 1353.2 L1209.4 1362.6 L1211.8 1354.6 C1212.4 1352.8 1214.6 1353.4 1214.2 1355.4 L1212.6 1363.6 L1216.4 1358.6 C1217.6 1357.2 1219.4 1358.4 1218.4 1360.2 L1213.4 1369.6 L1212.6 1373.8Z"/></g>
 <!-- zoom -->
 <circle cx="1243.6" cy="1363.8" r="7.4" fill="#d9d9d9" stroke="#6e6e6e" stroke-width="1.3"/><path d="M1249 1369.4 L1254.4 1374.6" stroke="#8a5a2a" stroke-width="2"/>
 <path d="M1252.6 1354.5 h6.6 M1255.9 1351.2 v6.6 M1252.6 1361 h6.6" stroke="#4a4a4a" stroke-width="1.5"/>
 <!-- zoom window -->
 <circle cx="1283" cy="1359.6" r="8" fill="#e8eef2" stroke="#9aa" stroke-width="1.6"/><rect x="1279" y="1355.8" width="8" height="7.4" fill="#fdfdfd" stroke="#555" stroke-width="1"/><path d="M1288.8 1365.6 L1295.6 1372.4" stroke="#444" stroke-width="2.6" stroke-linecap="round"/>
 <!-- display -->
 <rect x="1324" y="1351.6" width="21.4" height="17" fill="#e6e6e6" stroke="#6e6e6e" stroke-width="1.3"/><rect x="1327.2" y="1354.8" width="15" height="10.6" fill="#a9a9a9"/><path d="M1334.7 1368.6 v3.6 M1328 1373 h13.4" stroke="#6e6e6e" stroke-width="1.5"/>
 <!-- grid -->
 <g fill="none" stroke="#6e6e6e" stroke-width="1.3"><rect x="1370.6" y="1352" width="19" height="19"/><path d="M1377 1352 v19 M1383.4 1352 v19 M1370.6 1358.4 h19 M1370.6 1364.8 h19"/></g>
 <!-- viewports -->
 <path d="M1417.6 1358 L1422.6 1351.8 H1438.4 V1366.6 L1433.6 1373 M1433.6 1358 L1438.4 1351.8" fill="#f4f4f4" stroke="#6e6e6e" stroke-width="1.1"/>
 <rect x="1417.6" y="1358" width="16" height="15" fill="#9dc3ea" stroke="#5b88c0" stroke-width="1.1"/><circle cx="1423.2" cy="1367.2" r="3.8" fill="#bdbdbd" stroke="#555" stroke-width="1"/><circle cx="1428.4" cy="1362" r="2.2" fill="#d8d8d8" stroke="#555" stroke-width="0.9"/>
</svg>
<!-- logo -->
<svg style="left:2516px;top:1352px" width="30" height="28" viewBox="2516 1352 30 28">
 <circle cx="2530.5" cy="1366.3" r="10.7" fill="#000"/><rect x="2530.5" y="1366.3" width="10.7" height="10.7" fill="#000"/>
 <path d="M2523 1367.9 L2532.8 1361.8 M2523 1371 L2537.8 1361.8 M2531.8 1371.6 L2537.8 1367.8 M2527.4 1371.2 L2537.8 1364.8" stroke="#fff" stroke-width="1.4"/>
 <path d="M2527.4 1371.2 L2537.8 1364.8" stroke="#000" stroke-width="1.5" stroke-opacity="0.75"/>
 <rect x="2536" y="1370.4" width="1.2" height="1.6" fill="#fff"/>
</svg>
<!-- MODEL -->
<svg style="left:700px;top:370px" width="900" height="600" viewBox="700 370 900 600">
<defs>
<linearGradient id="gbeige" x1="0" y1="0" x2="1" y2="0"><stop offset="0" stop-color="#e9e4dd"/><stop offset="0.5" stop-color="#eeeae5"/><stop offset="1" stop-color="#e6e0d9"/></linearGradient>
<linearGradient id="gbot" x1="0" y1="0" x2="0" y2="1"><stop offset="0" stop-color="#d6d0c6"/><stop offset="1" stop-color="#b9b3a8"/></linearGradient>
<linearGradient id="gcup" x1="0" y1="0" x2="1" y2="0"><stop offset="0" stop-color="#c9c8c2"/><stop offset="0.18" stop-color="#d2d1cb"/><stop offset="0.45" stop-color="#a3a39d"/><stop offset="0.62" stop-color="#9c9b93"/><stop offset="1" stop-color="#b5b1a4"/></linearGradient>
<linearGradient id="gcupin" x1="0" y1="0" x2="1" y2="0"><stop offset="0" stop-color="#b6b5b0"/><stop offset="0.5" stop-color="#a0a09b"/><stop offset="1" stop-color="#bab9b3"/></linearGradient>
<linearGradient id="gbody" x1="0" y1="0" x2="1" y2="0"><stop offset="0" stop-color="#2676a3"/><stop offset="0.3" stop-color="#216991"/><stop offset="0.7" stop-color="#1e5f85"/><stop offset="1" stop-color="#19506f"/></linearGradient>
<linearGradient id="gdark" x1="0" y1="0" x2="1" y2="0"><stop offset="0" stop-color="#226b95"/><stop offset="0.5" stop-color="#1f6189"/><stop offset="1" stop-color="#1a5476"/></linearGradient>
<linearGradient id="glit" x1="0" y1="0" x2="1" y2="0"><stop offset="0" stop-color="#2a7fae"/><stop offset="0.45" stop-color="#3390c4"/><stop offset="1" stop-color="#2676a3"/></linearGradient>
<linearGradient id="gshank" x1="0" y1="0" x2="1" y2="0"><stop offset="0" stop-color="#2a2a28"/><stop offset="0.4" stop-color="#3d3d3a"/><stop offset="1" stop-color="#30302e"/></linearGradient>
<linearGradient id="gcut" x1="0" y1="0" x2="1" y2="0"><stop offset="0" stop-color="#a86f10"/><stop offset="0.35" stop-color="#c0811a"/><stop offset="1" stop-color="#a87012"/></linearGradient>
<radialGradient id="gball" cx="0.4" cy="0.35" r="0.7"><stop offset="0" stop-color="#fafbfc"/><stop offset="1" stop-color="#d5dade"/></radialGradient>
</defs>
<path d="M743.2 777.6 L1422.3 612.9 L1548.5 756.4 L817.3 940.5Z" fill="#cfe8f8" fill-opacity="0.32"/>
<path d="M1286.5 658.2 L1290.9 653 L1299.5 650.1 L1340 646.7 L1397.7 648.1 L1438.2 655.3 L1454.1 665.4 L1459 681.3 L1456.9 701.5 L1442.5 710.2 L1442.5 733.3 L1286.5 733.3Z" fill="#ddd6cc" fill-opacity="0.62"/>
<path d="M776.2 817.8 L808 809.5 L1230 745 L1287 745 L1287 800 L1269 809 L1266 813.5 L1260 820.7 L1231.7 830.5 L1181.1 843 L1080 870.5 L844.8 931.5 L833.2 930 L824.5 924.5 L818 915.5 L777.5 836 L775.6 827Z" fill="#a3d49e"/>
<path d="M857.8 905.9 L1080 849 L1199.3 822.7 L1236 806 L1249.9 804.5 L1245.8 811.6 L1231.7 819.7 L1199.3 829.8 L1080 860.6 L857.8 916.7 L846.2 916.7 L836.1 913.1Z" fill="#8ec48a"/>
<path d="M829 925 L832.5 934 L839 941 L850.5 946.5 L866 945.5 L985 910.2 L1080 881.5 L1185.3 848.9 L1219.9 840.2 L1254.6 821.2 L1274 811 L1262 820 L1231.7 829.5 L1181.1 842 L1080 869.5 L844.8 930.5Z" fill="url(#gbot)"/>
<path d="M850.2 861.8 L1080 804.5 L1227.6 764 L1229 784 L1080 823 L852 881Z" fill="#8ab889"/>
<path d="M852 880.5 L1080 822.7 L1227.6 783.3 L1232 800 L1199.3 822.7 L1080 849 L857.8 905.9 L851 893Z" fill="#719c6f"/>
<path d="M1199 790.5 L1203 786 L1228 779.5 L1231 782 L1231.5 808 L1225 813 L1199.5 821.5Z" fill="#678f66"/>
<path d="M806.5 788.9 L810.1 807.7 L815.9 820.7 L827.4 840.9 L839 853.9 L850.5 861.8 L854.9 904.4 L836.1 918.9 L827.4 904.4 L815.9 861.1 L810.1 827.9Z" fill="#93c493"/>
<path d="M806.5 788.9 L810.1 807.7 L815.9 820.7 L820.2 827.9 L815.9 829.3 L811.5 827.9 L809.4 807.7Z" fill="#7db37c"/>
<path d="M850.5 861.8 L852.3 869.8 L854.9 904.4 L847.7 910.2 L842.6 885.6 L839 853.9Z" fill="#87b787"/>
<path d="M806.5 788.2 L1164.5 694.7 L1173.1 695.5 L1185.3 703.3 L1202.6 711.1 L1230.3 715.4 L1254.6 713.7 L1268 720 L1268 756 L1226.9 765.7 L1133.3 789.1 L960 833.3 L850.2 861.8 L838.9 853.9 L827.4 840.9 L815.9 820.7 L810.1 807.7Z" fill="url(#gbeige)"/>
<path d="M1232 748.1 L1223.4 748.4 L1209.5 745.8 L1195.7 738 L1181.8 729.3 L1167.9 727.6 L815.9 817.9 L822 826.5 L1167.9 735.5 L1181.8 737.2 L1195.7 745.9 L1209.5 753.7 L1223.4 756.3 L1232 756Z" fill="#c6dab6"/>
<path d="M1226.8 743.2 L1270.2 743.2 L1270.2 800 L1248 812 L1230 806 L1226.8 790Z" fill="#9ccb9a"/>
<ellipse cx="1248.5" cy="743.2" rx="21.7" ry="12" fill="#86b886"/>
<ellipse cx="1249" cy="740.6" rx="14" ry="7" fill="#9ccb9a"/>
<path d="M1269 722.2 L1289.8 719.6 L1289.8 776.8 L1269 730.9Z" fill="#86b886"/>
<path d="M1179.2 840.2 L1195.7 835.4 L1205.2 846.8 L1205.7 861 L1189.1 865.5 L1179.2 850.3Z" fill="#b9b1a5" stroke="#3a3a36" stroke-width="0.7"/>
<path d="M1179.2 850.3 L1189.1 850.6 L1205.2 846.8 L1189.1 850.6 L1189.1 865.5" fill="none" stroke="#3a3a36" stroke-width="0.7"/>
<path d="M991.1 890.7 L1007.3 886.8 L1013.8 895.3 L1015.6 910.8 L998.1 915 L991.6 903.4Z" fill="#b9b1a5" stroke="#3a3a36" stroke-width="0.7"/>
<path d="M991.6 903.4 L998.1 900.7 L1013.8 895.3 L998.1 900.7 L998.1 915" fill="none" stroke="#3a3a36" stroke-width="0.7"/>
<g fill="none" stroke="#7fc4e8" stroke-width="1.5" stroke-linejoin="round">
<path d="M743.2 777.6 L1422.3 612.9 L1548.5 756.4 L817.3 940.5Z"/>
<path d="M748.2 778.4 L1421.4 615.6 L1544.6 755.2 L820.6 936.8Z"/>
<path d="M768.2 806.9 L927.1 767.5 L980.5 867.6 L818 907.3Z"/>
<path d="M775.9 809.4 L850.5 790.8 L897.5 884.9 L820.2 903.7Z"/>
<path d="M771.8 807.9 L927.1 769"/>
<path d="M1161 676.5 L1265 824.6 M1213 663.5 L1324.2 813.2 M1225.9 660.8 L1336 806 M1265 824.6 L1548.5 756.4 M1324.2 813.2 L1544.6 755.2"/>
<path d="M1161 678.6 L1421.4 615.6" stroke-width="1"/>
</g>
<g fill="none" stroke="#1f22e8" stroke-width="1.1">
<path d="M1252.8 734.5 L1252 740.6 L1230.3 740.6 L1219.9 737.1 L1206.1 727.6 L1192.2 718 L1178.3 716.3 L802.9 809.8 L788.4 814.9 L779.8 820.7 L776.9 827.9 L778.3 835.1 L818 914.5 L824.5 923.2 L833.2 928.3 L844.8 929.3 L1080 868.7 L1181.1 840.9 L1231.7 828.7 L1260.4 818.6 L1267.5 813 L1268.3 809.9 L1260.3 795.6 L1259.6 786.9 L1263.5 781.3 L1271.5 776.5 L1284.2 776.1" stroke-linejoin="round"/>
<path d="M1252.8 745.8 L1223.4 747.5 L1209.5 744.9 L1195.7 737.1 L1181.8 728.4 L1167.9 726.7 L815.9 817 L801.4 821.4 L794.9 827.9 L794.2 833.7 L796.4 839.4 L828.9 903 L836.1 913.1 L846.2 916.7 L857.8 916.7 L1080 860.6 L1199.3 829.8 L1231.7 819.4 L1244.5 811.5 L1249.2 805.1 L1248.4 787.6 L1254 779.7 L1263.5 774.9 L1274.6 773.4 L1285 776.5" stroke-linejoin="round"/>
<path d="M1252.8 745.8 V734.5"/>
</g>
<g fill="none" stroke="#2e2e2a" stroke-width="0.8">
<path d="M951.6 843.8 C922.8 838 857.8 861.1 839 908.8 C833.2 926.1 836.1 940.5 850.5 945.6 C872.2 946.3 922.8 890 948.7 861.1 C954.5 852.4 954.5 846.7 951.6 843.8"/>
<path d="M950.2 844.5 C908.3 846.7 850.5 890 849.1 924.6 C849.1 937.6 850.5 943.4 854.9 945.6"/>
<path d="M950.2 844.5 L836.1 923.2 M950.9 845.2 L849.1 924.6 M836.1 923.2 L849.1 924.6"/>
<path d="M1150.6 795.5 L1167.6 791.7 L1175.4 803.1 L1158.4 807.3Z M1153.4 812.5 L1170.4 808.7 L1178.2 820.1 L1161.2 824.3Z M1150.6 795.5 L1153.4 812.5 M1167.6 791.7 L1170.4 808.7 M1175.4 803.1 L1178.2 820.1 M1158.4 807.3 L1161.2 824.3"/>
<path d="M964.3 842.8 L981.7 838.5 L986.9 849.2 L969.9 853.7Z M967.1 858.4 L984.4 854.1 L989.6 864.8 L972.6 869.3Z M964.3 842.8 L967.1 858.4 M981.7 838.5 L984.4 854.1 M986.9 849.2 L989.6 864.8 M969.9 853.7 L972.6 869.3"/>
</g>
<path d="M1147.5 757 L1150.6 788.2" stroke="#cfc9c0" stroke-width="1" fill="none"/>
<path d="M1288.6 711 L1286.3 748.2 L1289.8 791.5 C1313.2 806.3 1340.9 814.4 1366.9 814.4 C1399.8 814.4 1434.5 795 1443.5 772.5 L1443.5 717 Z" fill="url(#gcup)" fill-opacity="0.93"/>
<ellipse cx="1362" cy="711" rx="74.5" ry="44.5" fill="#c9c8c3"/>
<ellipse cx="1362.5" cy="712" rx="68" ry="39.5" fill="url(#gcupin)"/>
<path d="M1294.5 710.1 C1302.8 663.3 1420.6 663.3 1429.6 710.1 C1420.6 677.2 1302.8 677.2 1294.5 710.1 Z" fill="#c7c6c1" fill-opacity="0.75"/>
<path d="M1311.4 741.3 C1323.6 728.3 1368.6 727.4 1380.8 736.1 C1368.6 750 1327 751.7 1311.4 741.3 Z" fill="#e9e4de"/>
<path d="M1370.4 741.3 C1373.8 732.6 1386 730.9 1396.3 739.6 C1386 748.2 1377.3 748.2 1370.4 741.3 Z" fill="#b9b8b2"/>
<path d="M1288 673.7 L1295 669.9 L1311.4 677.2 L1311.4 688.4 L1299.3 696.2 L1288 689.3Z" fill="#bcbbb5" fill-opacity="0.9"/>
<path d="M1419.7 679.8 L1436.2 675.1 L1448.3 686.7 L1460.5 701.4 L1460.5 711.8 L1444 717 L1442.3 706.6 L1429.3 696.2Z" fill="#c4c3bc" fill-opacity="0.9"/>
<path d="M1313.2 753.4 L1375.6 755.2 L1372.1 767.3 L1361.7 776.8 L1316.6 776.8 L1313.2 772.5Z" fill="#aaa9a2" fill-opacity="0.9"/>
<path d="M1269.9 740 L1289.3 740 L1289.3 777.3 L1284.2 767.8 L1266.7 774.1 L1249.2 784.5 L1250.8 790.8 L1263.5 805.9 L1269.1 809.1 L1269.9 816.2 L1255.6 815.4 L1244.5 811.5 L1249.2 805.1 L1248.4 787.6 L1255.6 763.8Z" fill="#8fbf8e"/>
<path d="M1249.2 784.5 L1266.7 774.1 L1284.2 767.8 L1288.9 774.9 L1295.3 787.6 L1296.5 800.7 L1287.4 802.7 L1269.1 809.1 L1263.5 805.9 L1250.8 790.8Z" fill="#bfbeb8"/>
<g fill="none" stroke="#22221f" stroke-width="0.9">
<ellipse cx="1362" cy="711" rx="74.5" ry="44.5"/>
<ellipse cx="1362.3" cy="712" rx="71" ry="42"/>
<ellipse cx="1362.6" cy="713" rx="68" ry="39.5"/>
<ellipse cx="1363" cy="714.5" rx="65" ry="37"/>
<path d="M1295.8 739.6 C1320.1 717 1403.3 717 1427.5 739.6"/>
<path d="M1299.3 744.8 C1323.6 722.2 1399.8 722.2 1424.1 744.8"/>
<path d="M1311.4 741.3 C1327 725.7 1368.6 725.7 1380.8 737.8"/>
<path d="M1295.8 786.3 C1313.2 806.3 1340.9 814.4 1366.9 814.4 C1399.8 814.4 1434.5 795 1443.5 772.5"/>
<path d="M1298.4 784.6 C1314.9 802.8 1340.9 811 1366.9 811 C1398.1 811 1431 792.4 1440.5 770.8"/>
<path d="M1413.7 739.6 C1434.5 748.2 1443.1 765.6 1431 786.3"/>
<path d="M1418.9 737.8 C1439.7 748.2 1446.6 763.8 1436.2 784.6"/>
<path d="M1288 673.7 L1295 669.9 L1311.4 677.2 L1311.4 688.4 L1299.3 696.2"/>
<path d="M1295 669.9 L1295.5 680.6 L1289.8 684.5 L1288 673.7"/>
<path d="M1419.7 679.8 L1436.2 675.1 L1448.3 686.7 L1460.5 701.4 L1460.5 711.8 L1444 717 L1442.3 706.6 L1457 701.1 L1442.3 686.7 L1424.1 692.8 L1419.7 679.8"/>
<path d="M1436.2 675.1 L1440.5 687.9 L1429.3 696.2"/>
<path d="M1313.2 753.4 L1314.9 775.1 L1320.1 776.8 L1361.7 776.8 L1372.1 767.3 L1375.6 756.9"/>
<path d="M1316.6 758.6 L1318.4 770.8 L1358.2 772.5 L1368.6 763.8 L1371.2 758.6"/>
<path d="M1314.9 775.1 L1318.4 770.8"/>
<path d="M1249.2 784.5 L1266.7 774.1 L1284.2 767.8"/>
<path d="M1258.8 795.6 L1279.4 789.2 L1285.8 798.8"/>
<path d="M1273.9 759.1 L1274.6 776.5 L1279.4 787.6 L1285.8 798.8 L1295.3 801.1"/>
<path d="M1278.6 760.6 L1280.2 773.4 L1287.4 787.6 L1293.7 795.6"/>
<path d="M1266.7 769.4 L1268.3 775.7 L1274.6 776.5"/>
<path d="M1200 842.4 L1227.8 827.4 L1255.6 815.4 L1269.1 809.1 L1287.4 801.9 L1295.3 800.4 L1311.2 806.7 L1323.9 810.3" stroke-width="1.5"/>
<path d="M1293.7 787.6 L1303.2 795.6 L1319.1 803.5 L1340 808.3"/>
<path d="M1199.3 840.9 C1199.3 810.6 1231.7 785.3 1277.1 773.1"/>
<path d="M1202.8 839.9 C1204.4 814.6 1231.7 793.4 1278.2 778.2"/>
<path d="M1208.4 836.8 C1221.5 816.6 1251.9 800.4 1282.2 790.3"/>
</g>
<g fill="none" stroke="#1f22e8" stroke-width="1.1"><path d="M1244.5 811.5 L1249.2 805.1 L1248.4 787.6 L1254 779.7 L1263.5 774.9 L1274.6 773.4 L1285 776.5"/><path d="M1260.4 818.6 L1267.5 813.1 L1268.3 809.9 L1260.4 795.6 L1259.6 786.9 L1263.5 781.3 L1271.5 776.5 L1284.2 776.1"/></g>
<g fill="none" stroke="#e8e800" stroke-width="1">
<path d="M1246.5 680.6 L1249.1 730.9 L1250.8 680.6 L1252.5 734.4"/>
<path d="M1285.4 727.4 L1286.3 776 L1288.9 710.1 L1293.2 786.3"/>
</g>
<path d="M1249.1 730.9 L1251.7 735.2" stroke="#18b018" stroke-width="1" fill="none"/>
<path d="M1286.3 776 L1294.1 787.2" stroke="#18b018" stroke-width="1" fill="none"/>
<g fill="none" stroke="#7fc4e8" stroke-width="1.4" stroke-opacity="0.9"><path d="M1225.9 660.8 L1336 806 M1213 663.5 L1324.2 813.2 M1324.2 813.2 L1544.6 755.2 M1265 824.6 L1548.5 756.4 M1422.3 612.9 L1548.5 756.4"/></g>
<path d="M1365.9 574 L1489.9 545.8 L1492.4 659.5 L1371 690Z" fill="#fbc873" fill-opacity="0.52"/>
<path d="M1355.6 586 L1409.3 646.5 L1413.4 767 L1358 700Z" fill="#fbc873" fill-opacity="0.52"/>
<path d="M1380.8 714.4 L1500.3 684.1 L1556.6 746.5 L1442.3 774.2Z" fill="#fbc873" fill-opacity="0.52"/>
<path d="M1348.6 567.2 L1355.8 701" stroke="#0a0aff" stroke-width="2.6" fill="none" stroke-dasharray="30 4 8 4 8 4 200"/>
<path d="M1366.6 707.6 L1509 672" stroke="#10e010" stroke-width="2.8" fill="none" stroke-dasharray="46 5 34 6 20 7 14 8 10 100"/>
<path d="M1360 716.2 L1420.6 790.7" stroke="#f01818" stroke-width="2.8" fill="none" stroke-dasharray="38 5 36 5 12"/>
<circle cx="1356" cy="709.3" r="8" fill="url(#gball)" stroke="#8a8a8a" stroke-width="1.8"/>
<path d="M1250 655 L1286.4 655 L1289.4 719 A17.4 6.4 0 0 1 1254.8 719 Z" fill="url(#gcut)"/>
<path d="M1246.4 612 L1284.4 612 L1286.4 652 A18.2 6.6 0 0 1 1250 655 Z" fill="url(#gshank)"/>
<path d="M1250 655.5 A18.2 6.6 0 0 0 1286.4 652.5 L1286.4 655.5 A18.2 6.6 0 0 1 1250 658 Z" fill="#7a5510" fill-opacity="0.6"/>
<path d="M1246 655.9 L1290 645" stroke="#7fc4e8" stroke-width="1.3" stroke-opacity="0.85" fill="none"/>
<path d="M1184.3 521.5 A74.25 32.7 0 0 0 1332.8 521.5 L1335.6 574.5 A73.2 35.35 -3.47886 0 1 1189.2 583.4Z" fill="url(#gbody)" stroke="url(#gbody)" stroke-width="0.7"/>
<path d="M1199.8 525 A57.9 14.65 -1.73121 0 0 1315.6 521.5 L1321.8 503.8 L1330.7 510.9 L1332.8 521.5 A74.25 32.7 0 0 1 1184.3 521.5 L1186.6 514.4 L1191.3 509.1Z" fill="#2776a2" stroke="#2776a2" stroke-width="0.7"/>
<path d="M1191.3 509.1 A65.25 8.85 -2.32568 0 0 1321.8 503.8 L1315.6 521.5 A57.9 14.65 -1.73121 0 1 1199.8 525Z" fill="url(#gdark)" stroke="url(#gdark)" stroke-width="0.7"/>
<path d="M1168 489.6 A84.15 14.5 0 0 0 1336.3 489.6 L1322.7 498.1 L1321.8 503.8 A65.25 8.85 -2.32568 0 1 1191.3 509.1 L1190.1 506.4 L1175.1 494.9Z" fill="#1f6088" stroke="#1f6088" stroke-width="0.7"/>
<path d="M1159.5 468.4 A95.3 22.5 -0.541077 0 0 1350.1 466.6 L1350.1 479 L1336.3 489.6 A84.15 14.5 0 0 1 1168 489.6 L1161.8 482.6Z" fill="url(#glit)" stroke="url(#glit)" stroke-width="0.7"/>
<path d="M1156 449.8 A96.2 25.8 -0.77422 0 0 1348.4 447.2 L1346.6 449.8 L1349.2 452.5 L1350.1 466.6 A95.3 22.5 -0.541077 0 1 1159.5 468.4 L1159.1 454.3 L1157.4 451.6Z" fill="url(#gdark)" stroke="url(#gdark)" stroke-width="0.7"/>
<path d="M1156 437.5 A96 33.55 -2.11779 0 0 1348 430.4 L1348.4 447.2 A96.2 25.8 -0.77422 0 1 1156 449.8Z" fill="#2b7fb0" stroke="#2b7fb0" stroke-width="0.7"/>
<path d="M1156 437.5 A96 33.55 -2.11779 0 0 1348 430.4 A96 46 -2.6 0 0 1156 437.5 Z" fill="#2878a5"/>
<path d="M1241.4 474.1 Q1251.1 472.3 1261.7 473.4" stroke="#bfe6f7" stroke-width="1.8" fill="none" stroke-linecap="round"/>
<path d="M1222.8 472 Q1251.1 475.5 1282.9 469.3" stroke="#5aa9d6" stroke-width="1.4" fill="none" stroke-linecap="round"/>
<path d="M1184.3 430.4 C1187.4 441.9 1215.7 451.6 1251.1 451.6 C1286.5 450.7 1314.8 436.6 1317.4 420.7 L1317.9 426.3 C1315.6 441.9 1286.5 457.5 1251.1 457.8 C1215.7 458.2 1186.6 447.2 1184.3 430.4 Z" fill="#1f6189"/>
<path d="M1191.3 509.1 Q1251.1 519.7 1321.8 503.8" stroke="#143f5a" stroke-width="1" fill="none"/>
<path d="M1205.1 528.5 Q1251.1 544.5 1309.5 524.1" stroke="#123a52" stroke-width="1.2" fill="none"/>
</svg>
</body></html>
